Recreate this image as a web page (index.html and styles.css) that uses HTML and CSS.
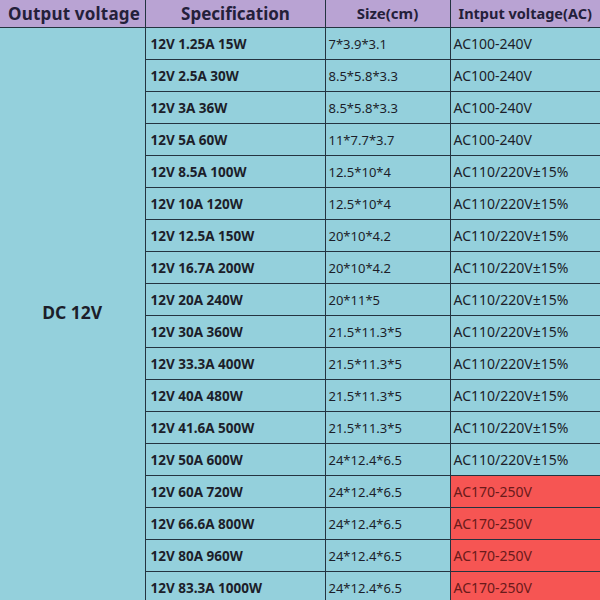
FILE: index.html
```html
<!DOCTYPE html>
<html>
<head>
<meta charset="utf-8">
<link rel="stylesheet" href="styles.css">
</head>
<body>
<table class="spec">
  <colgroup>
    <col class="c1"><col class="c2"><col class="c3"><col class="c4">
  </colgroup>
  <thead>
    <tr>
      <th class="h-out">Output voltage</th>
      <th class="h-spec">Specification</th>
      <th class="h-size">Size(cm)</th>
      <th class="h-in">Intput voltage(AC)</th>
    </tr>
  </thead>
  <tbody>
    <tr><td class="dc" rowspan="18"><span class="dc-label">DC 12V</span></td><td class="sp">12V 1.25A 15W</td><td class="sz">7*3.9*3.1</td><td class="ac">AC100-240V</td></tr>
    <tr><td class="sp">12V 2.5A 30W</td><td class="sz">8.5*5.8*3.3</td><td class="ac">AC100-240V</td></tr>
    <tr><td class="sp">12V 3A 36W</td><td class="sz">8.5*5.8*3.3</td><td class="ac">AC100-240V</td></tr>
    <tr><td class="sp">12V 5A 60W</td><td class="sz">11*7.7*3.7</td><td class="ac">AC100-240V</td></tr>
    <tr><td class="sp">12V 8.5A 100W</td><td class="sz">12.5*10*4</td><td class="ac">AC110/220V±15%</td></tr>
    <tr><td class="sp">12V 10A 120W</td><td class="sz">12.5*10*4</td><td class="ac">AC110/220V±15%</td></tr>
    <tr><td class="sp">12V 12.5A 150W</td><td class="sz">20*10*4.2</td><td class="ac">AC110/220V±15%</td></tr>
    <tr><td class="sp">12V 16.7A 200W</td><td class="sz">20*10*4.2</td><td class="ac">AC110/220V±15%</td></tr>
    <tr><td class="sp">12V 20A 240W</td><td class="sz">20*11*5</td><td class="ac">AC110/220V±15%</td></tr>
    <tr><td class="sp">12V 30A 360W</td><td class="sz">21.5*11.3*5</td><td class="ac">AC110/220V±15%</td></tr>
    <tr><td class="sp">12V 33.3A 400W</td><td class="sz">21.5*11.3*5</td><td class="ac">AC110/220V±15%</td></tr>
    <tr><td class="sp">12V 40A 480W</td><td class="sz">21.5*11.3*5</td><td class="ac">AC110/220V±15%</td></tr>
    <tr><td class="sp">12V 41.6A 500W</td><td class="sz">21.5*11.3*5</td><td class="ac">AC110/220V±15%</td></tr>
    <tr><td class="sp">12V 50A 600W</td><td class="sz">24*12.4*6.5</td><td class="ac">AC110/220V±15%</td></tr>
    <tr><td class="sp">12V 60A 720W</td><td class="sz">24*12.4*6.5</td><td class="ac red">AC170-250V</td></tr>
    <tr><td class="sp">12V 66.6A 800W</td><td class="sz">24*12.4*6.5</td><td class="ac red">AC170-250V</td></tr>
    <tr><td class="sp">12V 80A 960W</td><td class="sz">24*12.4*6.5</td><td class="ac red">AC170-250V</td></tr>
    <tr><td class="sp">12V 83.3A 1000W</td><td class="sz">24*12.4*6.5</td><td class="ac red">AC170-250V</td></tr>
  </tbody>
</table>
</body>
</html>
```

FILE: styles.css
```css
html, body {
  margin: 0;
  padding: 0;
  background: #94d0dc;
  overflow: hidden;
}

.spec {
  width: 600px;
  table-layout: fixed;
  border-collapse: collapse;
  font-family: "Noto Sans", "Open Sans", sans-serif;
  color: #1c1e2a;
  background: #94d0dc;
}

.c1 { width: 145px; }
.c2 { width: 180px; }
.c3 { width: 125px; }
.c4 { width: 150px; }

.spec th {
  background: #b9a3d3;
  height: 27px;
  padding: 0;
  font-weight: 700;
  color: #24203a;
  border-left: 1px solid #243340;
  border-bottom: 1px solid #243340;
  white-space: nowrap;
  line-height: 27px;
}

.spec th:first-child { border-left: none; }

.h-out { text-align: left; padding-left: 8px !important; font-size: 17px; letter-spacing: 0.2px; }
.h-spec { text-align: center; font-size: 17px; padding-left: 1px !important; }
.h-size { text-align: center; font-size: 15px; }
.h-in { text-align: left; padding-left: 8px !important; font-size: 14.5px; }

.spec td {
  height: 31px;
  padding: 0 0 0 4px;
  border-left: 1px solid #243340;
  border-bottom: 1px solid #243340;
  white-space: nowrap;
  vertical-align: middle;
}

.spec td.sp {
  font-size: 13.5px;
  font-weight: 700;
  padding-left: 5px;
}

.spec td.sz {
  font-size: 13px;
  padding-left: 3px;
}

.spec td.ac {
  font-size: 14px;
  padding-left: 3px;
}

.spec td.dc {
  border-left: none;
  text-align: center;
  vertical-align: top;
  padding: 0;
}

.dc-label {
  display: block;
  margin-top: 272px;
  font-size: 17.5px;
  font-weight: 700;
}

.spec td.red {
  background: #f65553;
  color: #6a1a1a;
}
```
